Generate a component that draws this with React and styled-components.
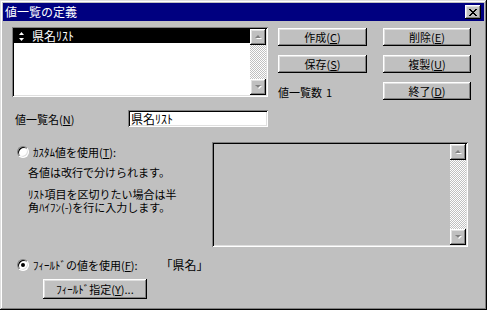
import React from "react";
import styled, { createGlobalStyle } from "styled-components";

const GlobalStyle = createGlobalStyle`
  html, body {
    margin: 0;
    padding: 0;
    background: #c0c0c0;
  }
  * {
    box-sizing: border-box;
  }
`;

const raised = `
  box-shadow: inset -1px -1px #000, inset 1px 1px #fff,
    inset -2px -2px #808080, inset 2px 2px #dfdfdf;
`;
const sunken = `
  box-shadow: inset 1px 1px #808080, inset -1px -1px #fff,
    inset 2px 2px #000, inset -2px -2px #dfdfdf;
`;

const Window = styled.div`
  width: 487px;
  height: 310px;
  padding: 3px;
  background: #c0c0c0;
  box-shadow: inset -1px -1px #000, inset 1px 1px #dfdfdf,
    inset -2px -2px #808080, inset 2px 2px #fff;
  font-family: "Noto Sans CJK JP", "DejaVu Sans", sans-serif;
  font-size: 11px;
  line-height: 14px;
  color: #000;
  display: flex;
  flex-direction: column;
`;

const TitleBar = styled.div`
  height: 18px;
  background: #000080;
  color: #fff;
  display: flex;
  align-items: center;
  justify-content: space-between;
  padding: 0 3px 0 2px;
  font-size: 12px;
`;

const CloseButton = styled.div`
  width: 16px;
  height: 14px;
  background: #c0c0c0;
  ${raised};
  display: flex;
  align-items: center;
  justify-content: center;
`;

const Body = styled.div`
  padding: 6px 0 0 9px;
  display: flex;
  flex-direction: column;
`;

const TopSection = styled.div`
  display: flex;
  align-items: flex-start;
`;

const ListBox = styled.div`
  width: 256px;
  height: 70px;
  background: #fff;
  ${sunken};
  padding: 2px;
  display: flex;
`;

const TextArea = styled.div`
  width: 256px;
  height: 105px;
  background: #c0c0c0;
  ${sunken};
  padding: 2px;
  display: flex;
  justify-content: flex-end;
`;

const ListItems = styled.div`
  flex: 1;
`;

const ListItem = styled.div`
  height: 14px;
  display: flex;
  align-items: center;
  gap: 8px;
  padding-left: 5px;
  font-size: 12px;
  background: ${(p) => (p.selected ? "#000" : "transparent")};
  color: ${(p) => (p.selected ? "#fff" : "#000")};
`;

const ScrollBar = styled.div`
  width: 16px;
  height: 100%;
  display: flex;
  flex-direction: column;
  justify-content: space-between;
  background: repeating-conic-gradient(#c0c0c0 0 25%, #fff 0 50%) 0 0 / 2px 2px;
`;

const ScrollButton = styled.div`
  width: 16px;
  height: 16px;
  background: #c0c0c0;
  ${raised};
  display: flex;
  align-items: center;
  justify-content: center;
`;

const ButtonGrid = styled.div`
  margin: 1px 0 0 10px;
  display: grid;
  grid-template-columns: 89px 88px;
  grid-auto-rows: 18px;
  column-gap: 16px;
  row-gap: 9px;
`;

const Button = styled.div`
  width: ${(p) => p.width || "100%"};
  height: ${(p) => p.height || "100%"};
  background: #c0c0c0;
  ${raised};
  display: flex;
  align-items: center;
  justify-content: center;
  white-space: nowrap;
`;

const CountText = styled.div`
  display: flex;
  align-items: center;
  gap: 4px;
  padding-top: 2px;
`;

const NameRow = styled.div`
  margin-top: 10px;
  display: grid;
  grid-template-columns: 116px 140px;
  align-items: center;
`;

const Label = styled.div`
  padding-left: 3px;
`;

const TextInput = styled.div`
  height: 17px;
  background: #fff;
  ${sunken};
  padding: 1px 0 0 3px;
  line-height: 15px;
  font-size: 12px;
`;

const OptionsSection = styled.div`
  margin-top: 15px;
  display: flex;
`;

const LeftColumn = styled.div`
  width: 200px;
  padding-top: 3px;
`;

const RadioRow = styled.div`
  display: flex;
  align-items: center;
  padding-left: 5px;
  gap: 4px;
  height: 14px;
`;

const RadioCircle = styled.div`
  width: 12px;
  height: 12px;
  border-radius: 50%;
  background: #fff;
  border: 1px solid;
  border-color: #808080 #fff #fff #808080;
  box-shadow: inset 1px 1px #000, inset -1px -1px #dfdfdf;
  display: flex;
  align-items: center;
  justify-content: center;

  &::after {
    content: "";
    width: 4px;
    height: 4px;
    border-radius: 50%;
    background: ${(p) => (p.checked ? "#000" : "transparent")};
  }
`;

const Hint = styled.p`
  margin: ${(p) => p.top || 0}px 0 0 16px;
  line-height: 13px;
`;

const FieldRow = styled.div`
  margin-top: 11px;
  display: flex;
  align-items: center;
`;

const FieldValue = styled.span`
  margin-left: 23px;
  font-size: 12px;
`;

const FieldButtonWrap = styled.div`
  margin: 7px 0 0 31px;
`;

const Key = styled.u`
  text-underline-offset: 1px;
`;

const Arrow = ({ down }) => (
  <svg width="9" height="6" viewBox="0 0 9 6">
    {down ? (
      <>
        <polygon points="2,2 8,2 5,5" fill="#fff" />
        <polygon points="1,1 7,1 4,4" fill="#808080" />
      </>
    ) : (
      <>
        <polygon points="5,2 8,5 2,5" fill="#fff" />
        <polygon points="4,1 7,4 1,4" fill="#808080" />
      </>
    )}
  </svg>
);

const Scroll = () => (
  <ScrollBar>
    <ScrollButton>
      <Arrow />
    </ScrollButton>
    <ScrollButton>
      <Arrow down />
    </ScrollButton>
  </ScrollBar>
);

const UpDown = () => (
  <svg width="5" height="9" viewBox="0 0 5 9">
    <polygon points="2.5,0 5,3 0,3" fill="#fff" />
    <polygon points="0,6 5,6 2.5,9" fill="#fff" />
  </svg>
);

const CloseIcon = () => (
  <svg width="8" height="7" viewBox="0 0 8 7">
    <path
      d="M0 0h2v1h1v1h2V1h1V0h2v1H7v1H6v1H5v1h1v1h1v1h1v1H6V6H5V5H3v1H2v1H0V6h1V5h1V4h1V3H2V2H1V1H0z"
      fill="#000"
    />
  </svg>
);

const App = () => {
  return (
    <>
      <GlobalStyle />
      <Window>
        <TitleBar>
          <span>値一覧の定義</span>
          <CloseButton>
            <CloseIcon />
          </CloseButton>
        </TitleBar>
        <Body>
          <TopSection>
            <ListBox>
              <ListItems>
                <ListItem selected>
                  <UpDown />
                  <span>県名ﾘｽﾄ</span>
                </ListItem>
              </ListItems>
              <Scroll />
            </ListBox>
            <ButtonGrid>
              <Button>
                作成(<Key>C</Key>)
              </Button>
              <Button>
                削除(<Key>E</Key>)
              </Button>
              <Button>
                保存(<Key>S</Key>)
              </Button>
              <Button>
                複製(<Key>U</Key>)
              </Button>
              <CountText>
                値一覧数 <span>1</span>
              </CountText>
              <Button>
                終了(<Key>D</Key>)
              </Button>
            </ButtonGrid>
          </TopSection>

          <NameRow>
            <Label>
              値一覧名(<Key>N</Key>)
            </Label>
            <TextInput>県名ﾘｽﾄ</TextInput>
          </NameRow>

          <OptionsSection>
            <LeftColumn>
              <RadioRow>
                <RadioCircle />
                <span>
                  ｶｽﾀﾑ値を使用(<Key>T</Key>):
                </span>
              </RadioRow>
              <Hint top={7}>各値は改行で分けられます。</Hint>
              <Hint top={9}>
                ﾘｽﾄ項目を区切りたい場合は半
                <br />
                角ﾊｲﾌﾝ(-)を行に入力します。
              </Hint>
            </LeftColumn>
            <TextArea>
              <Scroll />
            </TextArea>
          </OptionsSection>

          <FieldRow>
            <RadioRow>
              <RadioCircle checked />
              <span>
                ﾌｨｰﾙﾄﾞの値を使用(<Key>F</Key>):
              </span>
            </RadioRow>
            <FieldValue>「県名」</FieldValue>
          </FieldRow>

          <FieldButtonWrap>
            <Button width="104px" height="20px">
              ﾌｨｰﾙﾄﾞ指定(<Key>Y</Key>)...
            </Button>
          </FieldButtonWrap>
        </Body>
      </Window>
    </>
  );
};

export default App;
